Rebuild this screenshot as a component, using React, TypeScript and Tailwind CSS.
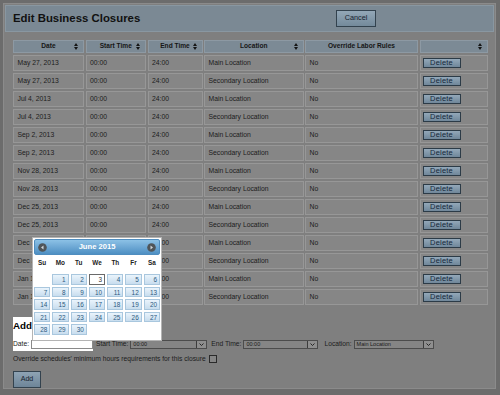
import React from 'react'

const rows = [
  ['May 27, 2013', 'Main Location'],
  ['May 27, 2013', 'Secondary Location'],
  ['Jul 4, 2013', 'Main Location'],
  ['Jul 4, 2013', 'Secondary Location'],
  ['Sep 2, 2013', 'Main Location'],
  ['Sep 2, 2013', 'Secondary Location'],
  ['Nov 28, 2013', 'Main Location'],
  ['Nov 28, 2013', 'Secondary Location'],
  ['Dec 25, 2013', 'Main Location'],
  ['Dec 25, 2013', 'Secondary Location'],
  ['Dec 31, 2013', 'Main Location'],
  ['Dec 31, 2013', 'Secondary Location'],
  ['Jan 1, 2014', 'Main Location'],
  ['Jan 1, 2014', 'Secondary Location'],
]

const weeks = [
  [null, 1, 2, 3, 4, 5, 6],
  [7, 8, 9, 10, 11, 12, 13],
  [14, 15, 16, 17, 18, 19, 20],
  [21, 22, 23, 24, 25, 26, 27],
  [28, 29, 30, null, null, null, null],
]

function SortIcon() {
  return (
    <svg width="4" height="7" viewBox="0 0 4 7" className="shrink-0">
      <path d="M0 3 L2 0 L4 3 Z M0 4 L2 7 L4 4 Z" fill="#151515" />
    </svg>
  )
}

function HeadCell({ label, sort = true }: { label: string; sort?: boolean }) {
  return (
    <div className="h-[13px] bg-[#7c8a95] border border-[#8d99a3] flex items-center">
      <span className="w-[9px]" />
      <span className="flex-1 text-center font-bold text-[6.6px] text-[#161616] leading-none">{label}</span>
      <span className="w-[9px] flex justify-end pr-[5px]">{sort && <SortIcon />}</span>
    </div>
  )
}

function Cell({ children }: { children?: React.ReactNode }) {
  return (
    <div className="h-[16.5px] bg-[#868686] border border-[#979797] pl-[3.5px] pt-[3px] text-[6.8px] leading-[8px] text-[#1c1c1c] whitespace-nowrap overflow-hidden">
      {children}
    </div>
  )
}

function Select({ value, width }: { value: string; width: string }) {
  return (
    <div className={`${width} h-[9px] border border-[#4c4c4c] bg-[#858585] flex items-center justify-between`}>
      <span className="pl-[2px] text-[5.5px] leading-none text-[#1a1a1a]">{value}</span>
      <span className="w-[10px] h-full border-l border-[#3c3c3c] bg-[#8e8e8e] flex items-center justify-center">
        <svg width="5" height="3" viewBox="0 0 5 3">
          <path d="M0.5 0.5 L2.5 2.5 L4.5 0.5" stroke="#1c1c1c" strokeWidth="0.9" fill="none" />
        </svg>
      </span>
    </div>
  )
}

function CalendarArrow({ dir }: { dir: 'prev' | 'next' }) {
  return (
    <svg width="9" height="9" viewBox="0 0 9 9">
      <circle cx="4.5" cy="4.5" r="4.3" fill="#4f5559" />
      {dir === 'prev' ? (
        <path d="M5.5 2.5 L3 4.5 L5.5 6.5 Z" fill="#cfd6db" />
      ) : (
        <path d="M3.5 2.5 L6 4.5 L3.5 6.5 Z" fill="#cfd6db" />
      )}
    </svg>
  )
}

function DatePicker() {
  return (
    <div className="absolute left-[32px] top-[237px] z-20 w-[130px] h-[104px] bg-white border border-[#b4b4b4] p-[1px]">
      <div className="h-[16px] rounded-[2px] border border-[#4f8dbf] bg-gradient-to-b from-[#8cc1e6] to-[#4e8fc3] flex items-center justify-between px-[3px]">
        <CalendarArrow dir="prev" />
        <span className="text-white font-bold text-[7.6px] leading-none">June 2015</span>
        <CalendarArrow dir="next" />
      </div>
      <div className="h-[17px] grid grid-cols-7 gap-x-[2px] items-center">
        {['Su', 'Mo', 'Tu', 'We', 'Th', 'Fr', 'Sa'].map((d) => (
          <span key={d} className="text-center font-bold text-[6.4px] leading-none text-[#222]">{d}</span>
        ))}
      </div>
      <div className="mt-[2px] grid grid-cols-7 gap-x-[2px] gap-y-[2px]">
        {weeks.flat().map((d, i) =>
          d === null ? (
            <span key={i} className="h-[10.5px]" />
          ) : d === 3 ? (
            <span key={i} className="h-[10.5px] bg-white border border-[#6a6a6a] text-right pr-[2px] text-[6.4px] leading-[9px] text-[#333]">{d}</span>
          ) : (
            <span key={i} className="h-[10.5px] bg-gradient-to-b from-[#eaf4fc] to-[#c8ddee] border border-[#a9c7de] text-right pr-[2px] text-[6.4px] leading-[9px] text-[#2c5a80]">{d}</span>
          )
        )}
      </div>
    </div>
  )
}

export default function App() {
  return (
    <div className="relative w-[500px] h-[395px] bg-[#6c6c6c] p-[3px] overflow-hidden" style={{ fontFamily: '"Liberation Sans", Arial, sans-serif' }}>
      <div className="w-[493px] h-[386px] border border-[#8b8b8b] bg-[#7f7f7f] p-[1px]">
        {/* title bar */}
        <div className="h-[27px] border border-[#8997a1] bg-[#7b8994] flex items-center px-[7px]">
          <h1 className="font-bold text-[11.4px] text-[#111] leading-none">Edit Business Closures</h1>
          <button className="ml-auto mr-[110px] w-[40px] h-[17px] border border-[#33424e] bg-gradient-to-b from-[#93a7b7] to-[#748a9b] text-[7.3px] text-[#16222e]">
            Cancel
          </button>
        </div>

        {/* closures table */}
        <div className="mt-[8px] ml-[8px] grid grid-cols-[71px_60.5px_55px_99.5px_113px_68px] gap-[1.5px]">
          <HeadCell label="Date" />
          <HeadCell label="Start Time" />
          <HeadCell label="End Time" />
          <HeadCell label="Location" />
          <HeadCell label="Override Labor Rules" sort={false} />
          <HeadCell label="" />
          {rows.map(([date, loc], i) => (
            <React.Fragment key={i}>
              <Cell>{date}</Cell>
              <Cell>00:00</Cell>
              <Cell>24:00</Cell>
              <Cell>{loc}</Cell>
              <Cell>No</Cell>
              <div className="h-[16.5px] bg-[#868686] border border-[#979797] pl-[2px] pt-[2.5px] flex items-start">
                <button className="w-[38px] h-[10px] border border-[#2c3b47] bg-gradient-to-b from-[#93a8b9] to-[#70879a] text-[7.5px] leading-none text-[#15273a] tracking-[0.2px] flex items-center justify-center">
                  Delete
                </button>
              </div>
            </React.Fragment>
          ))}
        </div>

        {/* add form */}
        <div className="mt-[12px] ml-[8px] flex items-end">
          <div className="w-[80px] h-[34px] bg-white relative z-10 flex flex-col justify-between pb-[2px]">
            <h3 className="pt-[4px] font-bold text-[9.8px] leading-none text-black whitespace-nowrap">Add Closure</h3>
            <div className="flex items-center">
              <label className="text-[6.7px] text-[#222] leading-none w-[18px]">Date:</label>
              <input className="w-[62px] h-[9px] border border-[#8a8a8a] bg-white outline-none" />
            </div>
          </div>
          <div className="flex items-center mb-[2px] text-[6.7px] leading-none text-[#1c1c1c]">
            <span className="ml-[3px] mr-[2px]">Start Time:</span>
            <Select value="00:00" width="w-[77px]" />
            <span className="ml-[4px] mr-[2px]">End Time:</span>
            <Select value="00:00" width="w-[75px]" />
            <span className="ml-[6px] mr-[2px]">Location:</span>
            <Select value="Main Location" width="w-[80px]" />
          </div>
        </div>

        <div className="ml-[8px] mt-[3px] h-[10px] flex items-center text-[6.7px] leading-none text-[#1c1c1c]">
          <span>Override schedules' minimum hours requirements for this closure</span>
          <span className="ml-[3px] w-[8px] h-[8px] border border-[#2a2a2a] bg-[#858585]" />
        </div>

        <button className="ml-[8px] mt-[1px] w-[28px] h-[17px] border border-[#33424e] bg-gradient-to-b from-[#8ea3b4] to-[#6e8598] text-[7.1px] text-[#16222e]">
          Add
        </button>
      </div>

      <DatePicker />
    </div>
  )
}
